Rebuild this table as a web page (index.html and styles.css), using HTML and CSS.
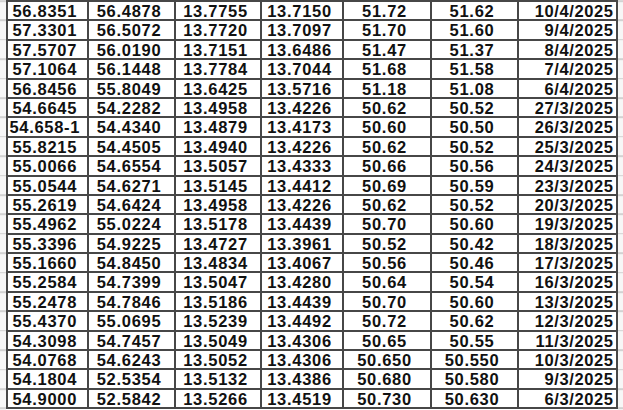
FILE: index.html
```html
<!DOCTYPE html>
<html>
<head>
<meta charset="utf-8">
<link rel="stylesheet" href="styles.css">
</head>
<body>
<div class="sheet">
  <div class="gutter gutter-left"></div>
  <div class="grid">
    <div class="c">56.8351</div><div class="c">56.4878</div><div class="c">13.7755</div><div class="c">13.7150</div><div class="c">51.72</div><div class="c">51.62</div><div class="c d">10/4/2025</div>
    <div class="c">57.3301</div><div class="c">56.5072</div><div class="c">13.7720</div><div class="c">13.7097</div><div class="c">51.70</div><div class="c">51.60</div><div class="c d">9/4/2025</div>
    <div class="c">57.5707</div><div class="c">56.0190</div><div class="c">13.7151</div><div class="c">13.6486</div><div class="c">51.47</div><div class="c">51.37</div><div class="c d">8/4/2025</div>
    <div class="c">57.1064</div><div class="c">56.1448</div><div class="c">13.7784</div><div class="c">13.7044</div><div class="c">51.68</div><div class="c">51.58</div><div class="c d">7/4/2025</div>
    <div class="c">56.8456</div><div class="c">55.8049</div><div class="c">13.6425</div><div class="c">13.5716</div><div class="c">51.18</div><div class="c">51.08</div><div class="c d">6/4/2025</div>
    <div class="c">54.6645</div><div class="c">54.2282</div><div class="c">13.4958</div><div class="c">13.4226</div><div class="c">50.62</div><div class="c">50.52</div><div class="c d">27/3/2025</div>
    <div class="c">54.658-1</div><div class="c">54.4340</div><div class="c">13.4879</div><div class="c">13.4173</div><div class="c">50.60</div><div class="c">50.50</div><div class="c d">26/3/2025</div>
    <div class="c">55.8215</div><div class="c">54.4505</div><div class="c">13.4940</div><div class="c">13.4226</div><div class="c">50.62</div><div class="c">50.52</div><div class="c d">25/3/2025</div>
    <div class="c">55.0066</div><div class="c">54.6554</div><div class="c">13.5057</div><div class="c">13.4333</div><div class="c">50.66</div><div class="c">50.56</div><div class="c d">24/3/2025</div>
    <div class="c">55.0544</div><div class="c">54.6271</div><div class="c">13.5145</div><div class="c">13.4412</div><div class="c">50.69</div><div class="c">50.59</div><div class="c d">23/3/2025</div>
    <div class="c">55.2619</div><div class="c">54.6424</div><div class="c">13.4958</div><div class="c">13.4226</div><div class="c">50.62</div><div class="c">50.52</div><div class="c d">20/3/2025</div>
    <div class="c">55.4962</div><div class="c">55.0224</div><div class="c">13.5178</div><div class="c">13.4439</div><div class="c">50.70</div><div class="c">50.60</div><div class="c d">19/3/2025</div>
    <div class="c">55.3396</div><div class="c">54.9225</div><div class="c">13.4727</div><div class="c">13.3961</div><div class="c">50.52</div><div class="c">50.42</div><div class="c d">18/3/2025</div>
    <div class="c">55.1660</div><div class="c">54.8450</div><div class="c">13.4834</div><div class="c">13.4067</div><div class="c">50.56</div><div class="c">50.46</div><div class="c d">17/3/2025</div>
    <div class="c">55.2584</div><div class="c">54.7399</div><div class="c">13.5047</div><div class="c">13.4280</div><div class="c">50.64</div><div class="c">50.54</div><div class="c d">16/3/2025</div>
    <div class="c">55.2478</div><div class="c">54.7846</div><div class="c">13.5186</div><div class="c">13.4439</div><div class="c">50.70</div><div class="c">50.60</div><div class="c d">13/3/2025</div>
    <div class="c">55.4370</div><div class="c">55.0695</div><div class="c">13.5239</div><div class="c">13.4492</div><div class="c">50.72</div><div class="c">50.62</div><div class="c d">12/3/2025</div>
    <div class="c">54.3098</div><div class="c">54.7457</div><div class="c">13.5049</div><div class="c">13.4306</div><div class="c">50.65</div><div class="c">50.55</div><div class="c d">11/3/2025</div>
    <div class="c">54.0768</div><div class="c">54.6243</div><div class="c">13.5052</div><div class="c">13.4306</div><div class="c">50.650</div><div class="c">50.550</div><div class="c d">10/3/2025</div>
    <div class="c">54.1804</div><div class="c">52.5354</div><div class="c">13.5132</div><div class="c">13.4386</div><div class="c">50.680</div><div class="c">50.580</div><div class="c d">9/3/2025</div>
    <div class="c">54.9000</div><div class="c">52.5842</div><div class="c">13.5266</div><div class="c">13.4519</div><div class="c">50.730</div><div class="c">50.630</div><div class="c d">6/3/2025</div>
  </div>
  <div class="gutter gutter-right"></div>
</div>
</body>
</html>
```
FILE: styles.css
```css
html, body {
  margin: 0;
  padding: 0;
  background: #fff;
}

.sheet {
  display: flex;
  align-items: stretch;
  width: 623px;
  height: 410px;
  overflow: hidden;
}

.gutter {
  background: repeating-linear-gradient(to bottom,
    #d2d2d2 0, #d2d2d2 1.6px,
    #f7f7f7 1.6px, #f7f7f7 19.4px);
  background-position: 0 0.2px;
}

.gutter-left {
  width: 5.5px;
  flex: none;
}

.gutter-right {
  flex: 1;
}

.grid {
  flex: none;
  display: grid;
  grid-template-columns: 79.5px 85px 84px 80px 86px 85px 96.5px;
  grid-auto-rows: 17.4px;
  gap: 2px;
  padding: 2px;
  align-self: flex-start;
  background: #474747;
}

.c {
  background: #fff;
  font-family: "Liberation Sans", Arial, sans-serif;
  font-weight: bold;
  font-size: 16.5px;
  letter-spacing: 0.7px;
  line-height: 17.4px;
  color: #111;
  text-align: center;
  padding: 1px 5px 0 0;
  white-space: nowrap;
  box-sizing: border-box;
}

.c.d {
  text-align: right;
  padding-right: 2px;
  letter-spacing: 0.6px;
}
```
